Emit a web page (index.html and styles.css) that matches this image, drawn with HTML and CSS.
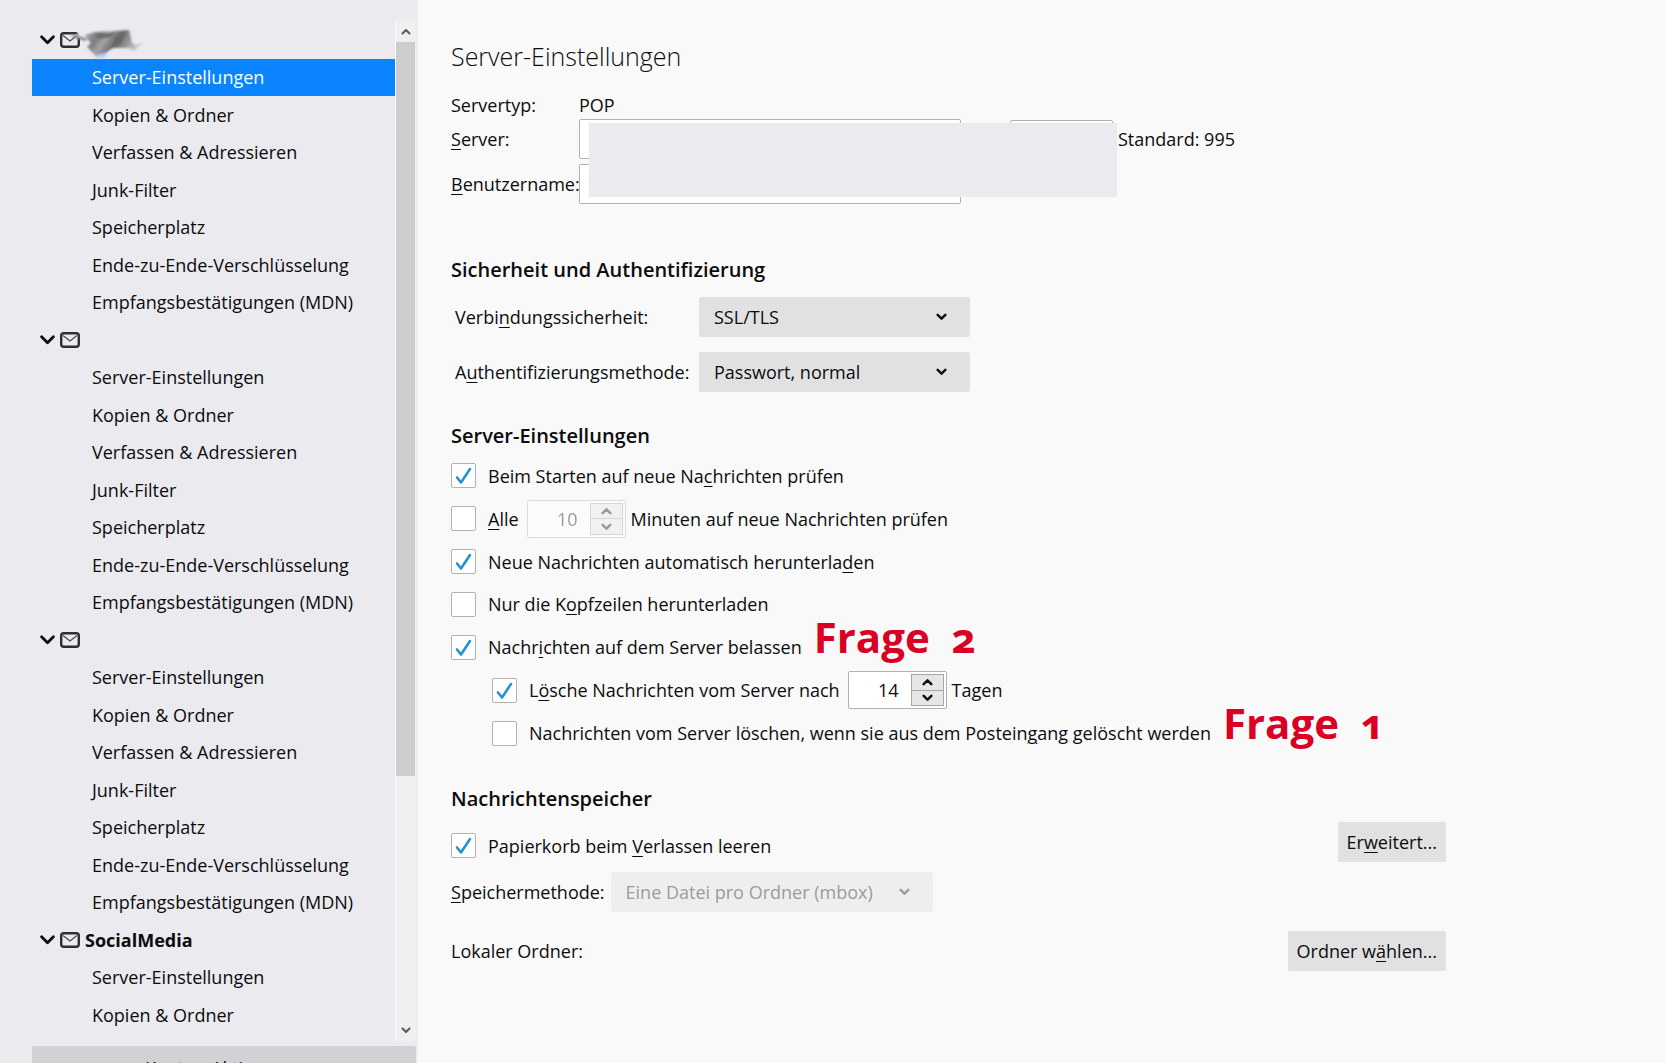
FILE: index.html
```html
<!DOCTYPE html>
<html lang="de">
<head>
    <meta charset="UTF-8">
    <meta name="viewport" content="width=device-width, initial-scale=1.0">
    <title>Konten-Einstellungen</title>
    <link rel="stylesheet" href="styles.css">
</head>
<body>
    <svg class="sprite" width="0" height="0" aria-hidden="true">
        <symbol id="twisty" viewBox="0 0 14 9"><path d="M1.5 1.5 7 7l5.5-5.5" fill="none" stroke="currentColor" stroke-width="2.6" stroke-linecap="round" stroke-linejoin="round"/></symbol>
        <symbol id="mail" viewBox="0 0 20 16"><rect x="1.200" y="1.200" width="17.600" height="13.600" rx="2.500" fill="none" stroke="#2f2f32" stroke-width="2.400"/><path d="M3 3.500 10 9l7-5.500" fill="none" stroke="#4a4a4e" stroke-width="1.200"/></symbol>
        <symbol id="down" viewBox="0 0 10 7"><path d="M1.5 1.5 5 5l3.5-3.5" fill="none" stroke="currentColor" stroke-width="2.2" stroke-linecap="round" stroke-linejoin="round"/></symbol>
        <symbol id="up" viewBox="0 0 10 7"><path d="M1.5 5.5 5 2l3.5 3.5" fill="none" stroke="currentColor" stroke-width="2.2" stroke-linecap="round" stroke-linejoin="round"/></symbol>
    </svg>

    <aside class="sidebar">
        <div class="tree-box">
            <nav class="tree">
                <div class="account">
                    <div class="account-name">
                        <svg class="twisty"><use href="#twisty"/></svg>
                        <svg class="mail"><use href="#mail"/></svg>
                        <svg class="smudge" viewBox="0 0 84 34" aria-hidden="true">
                            <defs>
                                <filter id="soft" x="-20%" y="-20%" width="140%" height="140%"><feGaussianBlur stdDeviation="1"/></filter>
                                <linearGradient id="grey" x1="0" x2="1" y1="0" y2="0.3">
                                    <stop offset="0" stop-color="#b4b4b7"/>
                                    <stop offset="0.25" stop-color="#7c7c7f"/>
                                    <stop offset="0.4" stop-color="#a4a4a7"/>
                                    <stop offset="0.6" stop-color="#6c6c6f"/>
                                    <stop offset="0.8" stop-color="#98989b"/>
                                    <stop offset="1" stop-color="#d0d0d3"/>
                                </linearGradient>
                            </defs>
                            <g filter="url(#soft)">
                                <path d="M7 4 12 5l-1 8-3-2z" fill="#eaeaef"/>
                                <path d="M-1 8 9 10l9 3-3 2-10-3z" fill="#8e8e91"/>
                                <path d="M15 9 25 6l18-1 16-1 3 13 4 2 8-3-10 9-5-3-16 0-6 4-4 4-6 1-7-7-3-4 4-2z" fill="url(#grey)"/>
                                <path d="M25 8l20-1-4 4-12 2z" fill="#6a6a6d"/>
                                <path d="M44 12l7-6 5 2-5 10-8 3z" fill="#68686b"/>
                                <path d="M26 29l9-2 2 3-6 3z" fill="#b4d2f5"/>
                            </g>
                        </svg>
                    </div>
                    <a class="entry selected" href="#">Server-Einstellungen</a>
                    <a class="entry" href="#">Kopien &amp; Ordner</a>
                    <a class="entry" href="#">Verfassen &amp; Adressieren</a>
                    <a class="entry" href="#">Junk-Filter</a>
                    <a class="entry" href="#">Speicherplatz</a>
                    <a class="entry" href="#">Ende-zu-Ende-Verschlüsselung</a>
                    <a class="entry" href="#">Empfangsbestätigungen (MDN)</a>
                </div>
                <div class="account">
                    <div class="account-name">
                        <svg class="twisty"><use href="#twisty"/></svg>
                        <svg class="mail"><use href="#mail"/></svg>
                    </div>
                    <a class="entry" href="#">Server-Einstellungen</a>
                    <a class="entry" href="#">Kopien &amp; Ordner</a>
                    <a class="entry" href="#">Verfassen &amp; Adressieren</a>
                    <a class="entry" href="#">Junk-Filter</a>
                    <a class="entry" href="#">Speicherplatz</a>
                    <a class="entry" href="#">Ende-zu-Ende-Verschlüsselung</a>
                    <a class="entry" href="#">Empfangsbestätigungen (MDN)</a>
                </div>
                <div class="account">
                    <div class="account-name">
                        <svg class="twisty"><use href="#twisty"/></svg>
                        <svg class="mail"><use href="#mail"/></svg>
                    </div>
                    <a class="entry" href="#">Server-Einstellungen</a>
                    <a class="entry" href="#">Kopien &amp; Ordner</a>
                    <a class="entry" href="#">Verfassen &amp; Adressieren</a>
                    <a class="entry" href="#">Junk-Filter</a>
                    <a class="entry" href="#">Speicherplatz</a>
                    <a class="entry" href="#">Ende-zu-Ende-Verschlüsselung</a>
                    <a class="entry" href="#">Empfangsbestätigungen (MDN)</a>
                </div>
                <div class="account account-short">
                    <div class="account-name">
                        <svg class="twisty"><use href="#twisty"/></svg>
                        <svg class="mail"><use href="#mail"/></svg>
                        <span>SocialMedia</span>
                    </div>
                    <a class="entry" href="#">Server-Einstellungen</a>
                    <a class="entry" href="#">Kopien &amp; Ordner</a>
                </div>
            </nav>
            <div class="scrollbar">
                <button class="scroll-button" type="button" aria-label="Nach oben"><svg><use href="#up"/></svg></button>
                <div class="track"><div class="thumb"></div></div>
                <button class="scroll-button" type="button" aria-label="Nach unten"><svg><use href="#down"/></svg></button>
            </div>
        </div>
        <button class="account-actions" type="button">Konten-Aktionen <svg class="arrow"><use href="#down"/></svg></button>
    </aside>

    <main class="content">
        <h1>Server-Einstellungen</h1>

        <div class="server">
            <span>Servertyp:</span>
            <span>POP</span>
            <label for="server"><u>S</u>erver:</label>
            <div class="server-line">
                <input class="text-box" id="server" type="text">
                <input class="text-box port" type="text" aria-label="Port">
                <span>Standard: 995</span>
            </div>
            <label for="user"><u>B</u>enutzername:</label>
            <input class="text-box" id="user" type="text">
            <div class="cover"></div>
        </div>

        <h2>Sicherheit und Authentifizierung</h2>
        <div class="security">
            <label for="security">Verbi<u>n</u>dungssicherheit:</label>
            <div class="select">
                <select id="security"><option>SSL/TLS</option></select>
                <svg class="arrow"><use href="#down"/></svg>
            </div>
            <label for="auth">A<u>u</u>thentifizierungsmethode:</label>
            <div class="select">
                <select id="auth"><option>Passwort, normal</option></select>
                <svg class="arrow"><use href="#down"/></svg>
            </div>
        </div>

        <h2>Server-Einstellungen</h2>
        <div class="options">
            <div class="option">
                <input type="checkbox" id="startup" checked>
                <label for="startup">Beim Starten auf neue Na<u>c</u>hrichten prüfen</label>
            </div>
            <div class="option">
                <input type="checkbox" id="every">
                <label for="every"><u>A</u>lle</label>
                <div class="spin disabled">
                    <input type="number" id="minutes" value="10" disabled>
                    <div class="spin-buttons">
                        <button type="button" aria-label="Mehr" disabled><svg class="arrow"><use href="#up"/></svg></button>
                        <button type="button" aria-label="Weniger" disabled><svg class="arrow"><use href="#down"/></svg></button>
                    </div>
                </div>
                <label for="minutes">Minuten auf neue Nachrichten prüfen</label>
            </div>
            <div class="option">
                <input type="checkbox" id="download" checked>
                <label for="download">Neue Nachrichten automatisch herunterla<u>d</u>en</label>
            </div>
            <div class="option">
                <input type="checkbox" id="headers">
                <label for="headers">Nur die K<u>o</u>pfzeilen herunterladen</label>
            </div>
            <div class="option">
                <input type="checkbox" id="leave" checked>
                <label for="leave">Nachr<u>i</u>chten auf dem Server belassen</label>
                <strong class="note">Frage&nbsp; 2</strong>
            </div>
            <div class="option indent">
                <input type="checkbox" id="delete-after" checked>
                <label for="delete-after">L<u>ö</u>sche Nachrichten vom Server nach</label>
                <div class="spin">
                    <input type="number" id="days" value="14">
                    <div class="spin-buttons">
                        <button type="button" aria-label="Mehr"><svg class="arrow"><use href="#up"/></svg></button>
                        <button type="button" aria-label="Weniger"><svg class="arrow"><use href="#down"/></svg></button>
                    </div>
                </div>
                <label for="days">Tagen</label>
            </div>
            <div class="option indent">
                <input type="checkbox" id="delete-moved">
                <label for="delete-moved">Nachrichten vom Server löschen, wenn sie aus dem Postein<u>g</u>ang gelöscht werden</label>
                <strong class="note">Frage&nbsp; 1</strong>
            </div>
        </div>

        <h2>Nachrichtenspeicher</h2>
        <div class="storage-line trash-line">
            <div class="option">
                <input type="checkbox" id="trash" checked>
                <label for="trash">Papierkorb beim <u>V</u>erlassen leeren</label>
            </div>
            <button class="button" type="button">Er<u>w</u>eitert...</button>
        </div>
        <div class="store">
            <label for="store"><u>S</u>peichermethode:</label>
            <div class="select">
                <select id="store" disabled><option>Eine Datei pro Ordner (mbox)</option></select>
                <svg class="arrow"><use href="#down"/></svg>
            </div>
        </div>
        <div class="storage-line">
            <span>Lokaler Ordner:</span>
            <button class="button" type="button">Ordner w<u>ä</u>hlen...</button>
        </div>
    </main>
</body>
</html>
```
FILE: styles.css
```css
* {
    box-sizing: border-box;
}

body {
    display: flex;
    height: 100vh;
    margin: 0;
    overflow: hidden;
    background-color: #f9f9fa;
    color: #0c0c0d;
    font-family: "Open Sans", "Noto Sans", sans-serif;
    font-size: 18px;
    line-height: 24px;
}

button,
input,
select {
    margin: 0;
    font: inherit;
    color: inherit;
}

u {
    text-decoration-thickness: 1px;
    text-underline-offset: 3px;
}

svg {
    flex: none;
}

.sprite {
    position: absolute;
}

/* sidebar */
.sidebar {
    display: flex;
    flex: none;
    flex-direction: column;
    gap: 5px;
    width: 418px;
    padding: 21px 1px 0 32px;
    border-right: 1px solid #f1f1f5;
    background-color: #eaeaef;
}

.tree-box {
    display: flex;
    flex: 1;
    min-height: 0;
}

.tree {
    flex: 1;
    overflow: hidden;
}

.account {
    display: grid;
    grid-auto-rows: 1fr;
    height: 300px;
}

.account-short {
    height: 113px;
}

.account-name {
    position: relative;
    display: flex;
    align-items: center;
    padding-left: 8px;
    font-weight: bold;
}

.twisty {
    width: 15px;
    height: 10px;
    margin-right: 5px;
}

.mail {
    width: 20px;
    height: 16px;
    margin-right: 5px;
}

.smudge {
    position: absolute;
    left: 38px;
    top: 5px;
    width: 84px;
    height: 34px;
}

.entry {
    display: flex;
    align-items: center;
    padding-left: 60px;
    color: inherit;
    text-decoration: none;
}

.selected {
    background-color: #0a84ff;
    color: #fff;
}

.scrollbar {
    display: flex;
    flex-direction: column;
    width: 21px;
    border-left: 1px solid #fff;
    background-color: #f0f0f0;
}

.scroll-button {
    display: flex;
    align-items: center;
    justify-content: center;
    height: 21px;
    padding: 0;
    border: none;
    background: none;
    color: #606060;
}

.scroll-button svg {
    width: 10px;
    height: 7px;
}

.track {
    flex: 1;
}

.thumb {
    height: 75%;
    margin-right: 1px;
    background-color: #cdcdcd;
}

/* runs past the lower window edge */
.account-actions {
    display: flex;
    flex: none;
    align-items: center;
    justify-content: center;
    gap: 6px;
    height: 44px;
    margin-bottom: -27px;
    border: none;
    border-radius: 2px;
    background-color: #d2d2d6;
}

/* settings page */
.content {
    flex: 1;
    max-width: 1028px;
    padding: 38px 0 0 33px;
}

h1 {
    margin: 0 0 22px;
    font-size: 25px;
    font-weight: 300;
    line-height: 36px;
}

h2 {
    margin: 0;
    font-size: 20px;
    font-weight: 600;
    line-height: 28px;
}

.server {
    position: relative;
    display: grid;
    grid-template-columns: 128px 1fr;
    grid-template-rows: 18px 40px 40px;
    align-items: center;
    row-gap: 5px;
    margin-bottom: 52px;
}

.server-line {
    display: flex;
    align-items: center;
}

.text-box {
    width: 382px;
    height: 40px;
    border: 1px solid #b1b1b1;
    border-radius: 2px;
    background-color: #fff;
}

.port {
    width: 103px;
    height: 38px;
    margin: 0 5px 0 49px;
}

/* hides the account data */
.cover {
    position: absolute;
    left: 138px;
    bottom: 7px;
    width: 528px;
    height: 74px;
    background-color: #eaeaef;
}

.security {
    display: grid;
    grid-template-columns: 244px 271px;
    align-items: center;
    row-gap: 15px;
    margin: 13px 0 30px 4px;
}

.select {
    position: relative;
    display: grid;
    align-items: center;
}

.select select {
    width: 100%;
    height: 40px;
    padding: 0 40px 0 15px;
    border: none;
    border-radius: 2px;
    background-color: #e1e1e2;
    appearance: none;
}

.select .arrow {
    position: absolute;
    right: 23px;
    pointer-events: none;
}

.select select:disabled {
    background-color: #eeeeef;
    color: #9c9c9d;
    opacity: 1;
}

.select select:disabled + .arrow {
    color: #9c9c9d;
}

.arrow {
    width: 11px;
    height: 8px;
}

.options {
    display: grid;
    grid-auto-rows: 1fr;
    row-gap: 5px;
    height: 295px;
    margin: 7px 0 33px;
}

.option {
    display: flex;
    align-items: center;
}

.indent {
    padding-left: 41px;
}

input[type="checkbox"] {
    flex: none;
    width: 25px;
    height: 25px;
    margin-right: 12px;
    border: 1px solid #b1b1b1;
    border-radius: 2px;
    background-color: #fff;
    appearance: none;
}

input[type="checkbox"]:checked {
    background-image: url('data:image/svg+xml,<svg xmlns="http://www.w3.org/2000/svg" viewBox="0 0 23 23"><path d="M5 13.5 9 18.500 18 5" fill="none" stroke="%232292d0" stroke-width="2.6" stroke-linecap="round" stroke-linejoin="round"/></svg>');
}

.spin {
    display: flex;
    width: 99px;
    height: 38px;
    margin: 0 5px 0 8px;
    padding: 2px;
    border: 1px solid #b1b1b1;
    border-radius: 2px;
    background-color: #fff;
}

.spin input {
    flex: 1;
    min-width: 0;
    padding: 0 12px 0 0;
    border: none;
    background: none;
    text-align: right;
    appearance: textfield;
}

.spin input::-webkit-inner-spin-button {
    appearance: none;
}

.spin-buttons {
    display: grid;
    width: 33px;
    border: 1px solid #a6a6a6;
    background-color: #e6e6e6;
}

.spin-buttons button {
    display: flex;
    align-items: center;
    justify-content: center;
    padding: 0;
    border: none;
    background: none;
}

.spin-buttons button + button {
    border-top: 1px solid #a6a6a6;
}

.disabled {
    opacity: 0.4;
}

.note {
    margin: -20px 0 0 12px;
    color: #d90023;
    font-size: 42px;
    font-variant-numeric: oldstyle-nums;
    line-height: 38px;
    white-space: nowrap;
}

.storage-line {
    display: flex;
    align-items: center;
    justify-content: space-between;
}

.trash-line {
    align-items: flex-start;
    margin-top: 9px;
}

.trash-line .option {
    padding-top: 11px;
}

.button {
    height: 40px;
    padding: 0 9px;
    border: none;
    border-radius: 2px;
    background-color: #e1e1e2;
}

.store {
    display: flex;
    align-items: center;
    gap: 6px;
    margin: 10px 0 19px;
}

.store .select {
    width: 322px;
}
```
